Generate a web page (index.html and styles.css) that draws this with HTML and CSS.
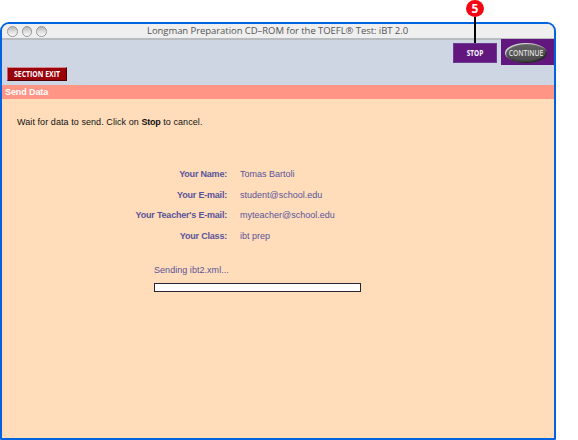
FILE: index.html
```html
<!DOCTYPE html>
<html lang="en">
<head>
<meta charset="utf-8">
<title>Longman Preparation CD-ROM</title>
<link rel="stylesheet" href="styles.css">
</head>
<body>
<div class="window">
  <header class="titlebar">
    <div class="lights"><i></i><i></i><i></i></div>
    <span class="title">Longman Preparation CD–ROM for the TOEFL® Test: iBT 2.0</span>
  </header>
  <div class="toolbar">
    <button class="exit"><span>SECTION EXIT</span></button>
    <div class="actions">
      <button class="stop"><span>STOP</span></button>
      <div class="continue-box"><button class="continue"><span>CONTINUE</span></button></div>
    </div>
  </div>
  <h1 class="band">Send Data</h1>
  <main class="content">
    <p class="intro"><span>Wait for data to send. Click on </span><b>Stop</b><span> to cancel.</span></p>
    <dl class="details">
      <dt>Your Name:</dt><dd>Tomas Bartoli</dd>
      <dt>Your E-mail:</dt><dd>student@school.edu</dd>
      <dt>Your Teacher's E-mail:</dt><dd>myteacher@school.edu</dd>
      <dt>Your Class:</dt><dd>ibt prep</dd>
    </dl>
    <p class="status">Sending ibt2.xml...</p>
    <div class="progress"></div>
  </main>
</div>
<div class="callout"><span>5</span></div>
</body>
</html>
```
FILE: styles.css
```css
* { box-sizing: border-box; }
body {
  margin: 0;
  padding-top: 22px;
  height: 440px;
  overflow: hidden;
  background: #fff;
  font-family: "Liberation Sans", Arial, sans-serif;
}
p, h1, dl, dd { margin: 0; }
button { border: 0; padding: 0; margin: 0; color: #fff; }
.window {
  width: 556px;
  height: 418px;
  border: 2px solid #0263e0;
  border-radius: 9px 9px 1px 1px;
  background: #ffddbb;
  overflow: hidden;
}
.titlebar {
  display: grid;
  grid-template-columns: 145px 1fr;
  height: 16px;
  background: #efefef;
  border-bottom: 2px solid #b9bcbf;
}
.lights { display: flex; gap: 4px; padding: 2px 0 0 5px; }
.lights i {
  width: 10.5px;
  height: 10.5px;
  border-radius: 50%;
  border: 1px solid #999;
  background: linear-gradient(#b4b4b4, #dedede 50%, #fafafa);
}
.title {
  font: 9.5px/14px "Open Sans", sans-serif;
  letter-spacing: -0.06px;
  color: #555;
  white-space: nowrap;
}
.toolbar {
  display: flex;
  justify-content: space-between;
  height: 45px;
  background: #ced6e4;
}
.exit {
  align-self: flex-end;
  width: 60px;
  height: 14px;
  margin: 0 0 4px 5px;
  background: #990009;
  border: 1px solid;
  border-color: #d58a91 #4d0006 #4d0006 #c4646c;
  font: bold 8px/11px "Open Sans", sans-serif;
}
.exit span, .continue span, .stop span { display: block; white-space: nowrap; }
.exit span { margin: -1px -10px 0; transform: scaleX(.86); }
.actions { display: flex; align-items: flex-start; gap: 4px; }
.stop {
  width: 44px;
  height: 20px;
  margin-top: 3px;
  background: #62177f;
  border: 1px solid #6f3b91;
  font: bold 8px/18px "Open Sans", sans-serif;
}
.stop span { transform: scaleX(.8); }
.continue-box {
  width: 53px;
  height: 26px;
  padding: 3px 0 0 4px;
  margin-top: -1px;
  background: #62177f;
}
.continue {
  width: 42px;
  height: 20px;
  border-radius: 50%;
  background: linear-gradient(#626262, #4a4a4a);
  box-shadow: inset 1px 1px 1px #e0e0e0, inset -1px -1px 2px #1c1c1c;
  color: #ddd;
  font: 600 8px/19px "Open Sans", sans-serif;
}
.continue span { margin: 0 -8px; transform: scaleX(.84); }
.band {
  height: 14px;
  padding-left: 3px;
  background: #ff9585;
  color: #fff;
  font-size: 9px;
  line-height: 14px;
  letter-spacing: -0.1px;
}
.content { padding: 16px 15px; font-size: 9px; line-height: 15px; }
.intro { white-space: pre; color: #111; letter-spacing: .07px; }
.intro b { letter-spacing: -.2px; }
.details {
  display: grid;
  grid-template-columns: 210px 1fr;
  column-gap: 13px;
  grid-auto-rows: 20.7px;
  margin-top: 34px;
  line-height: 20.7px;
  color: #5a5399;
}
.details dt { font-weight: bold; text-align: right; letter-spacing: -.2px; }
.status { margin: 16.2px 0 0 137px; color: #5a5399; letter-spacing: .04px; }
.progress {
  width: 207px;
  height: 9px;
  margin: 5px 0 0 137px;
  border: 1px solid #292435;
  background: #fff;
}
.callout {
  position: absolute;
  left: 466px;
  top: 0;
  width: 18px;
  height: 17px;
  border-radius: 50%;
  background: #f30712;
  color: #fff;
  font: bold 12px/17px "Open Sans", sans-serif;
  text-align: center;
}
.callout::after {
  content: "";
  position: absolute;
  left: 8px;
  top: 17px;
  width: 2px;
  height: 26px;
  background: #000;
}
```
